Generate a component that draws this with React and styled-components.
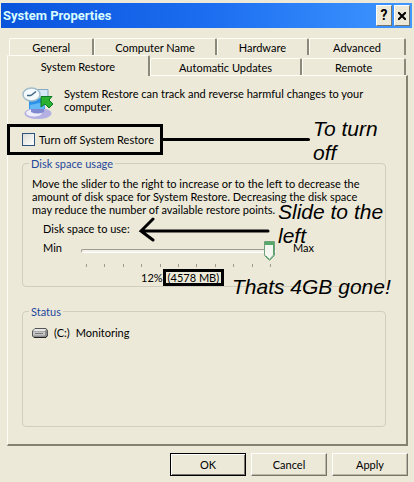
import { useState } from 'react'
import styled, { createGlobalStyle } from 'styled-components'

const GlobalStyle = createGlobalStyle`
    * {
        box-sizing: border-box;
    }

    body {
        margin: 0;
        background: #ece9d8;
    }

    body, button, input {
        font-family: Lato, "Liberation Sans", Arial, sans-serif;
        font-size: 11px;
        line-height: 13px;
        color: #000;
    }
`

const Window = styled.main`
    display: flex;
    flex-direction: column;
    min-height: 100vh;
    padding: 3px 2px 6px 1px;
    background: #ece9d8;
    overflow: hidden;
`

const TitleBar = styled.header`
    display: flex;
    align-items: center;
    gap: 2px;
    height: 25px;
    padding: 0 2px;
    background: linear-gradient(to right, #0a54dc, #1c6df0 50%, #3f97ff);
`

const Title = styled.h1`
    flex: 1;
    margin: 0;
    font-family: Roboto, Arial, sans-serif;
    font-size: 13px;
    line-height: 16px;
    color: #d8fbff;
`

const CaptionButton = styled.button`
    display: flex;
    align-items: center;
    justify-content: center;
    width: 16px;
    height: 21px;
    padding: 0;
    border: 1px solid;
    border-color: #fff #77756a #77756a #fff;
    background: #ece9d8;
    font-family: Roboto, Arial, sans-serif;
    font-size: 14px;
    font-weight: bold;
`

const Body = styled.div`
    flex: 1;
    display: flex;
    flex-direction: column;
    padding: 10px 4px 0 6px;
`

const TabRow = styled.div`
    display: flex;
    align-items: flex-end;
    height: ${({ $front }) => ($front ? '20px' : '17px')};
    padding: ${({ $front }) => ($front ? '0 2px 0 0' : '0 2px')};
`

const Tab = styled.button`
    flex: ${({ $grow }) => $grow} 1 0;
    min-width: 0;
    height: ${({ $active }) => ($active ? '21px' : '17px')};
    padding: 0;
    border: 1px solid;
    border-width: 1px 2px 0 1px;
    border-color: #fffef4 #8b897b #fffef4 #fffef4;
    border-radius: 2px 2px 0 0;
    background: #ece9d8;
    white-space: nowrap;
    position: relative;
    z-index: ${({ $active }) => ($active ? 1 : 0)};
    margin-bottom: ${({ $active }) => ($active ? '-1px' : '0')};
`

const Panel = styled.section`
    flex: 1;
    display: flex;
    flex-direction: column;
    padding: 11px 20px 17px 14px;
    border: 1px solid;
    border-width: 1px 2px 2px 1px;
    border-color: #fffef4 #85836f #85836f #fffef4;
`

const Intro = styled.div`
    display: flex;
    gap: 10px;
    min-height: 32px;
`

const Paragraph = styled.p`
    margin: 0;
`

const CheckRow = styled.div`
    display: flex;
    align-items: center;
    position: relative;
    margin: 5px 0 0 -15px;
    padding-right: 76px;
`

const CheckLabel = styled.label`
    display: flex;
    align-items: center;
    gap: 4px;
    height: 31px;
    padding: 0 6px 0 12px;
    border: 3px solid #000;
    white-space: nowrap;
`

const Checkbox = styled.input`
    appearance: none;
    width: 13px;
    height: 13px;
    margin: 0;
    border: 1px solid #2d5480;
    background: linear-gradient(135deg, #dcdcd7, #fff);

    &:checked {
        background: #21a121;
    }
`

const Connector = styled.span`
    flex: 1;
    height: 3px;
    border-radius: 0 2px 2px 0;
    background: #000;
`

// remarks lying over the dialog
const Note = styled.span`
    position: absolute;
    font-family: "Liberation Sans", Arial, sans-serif;
    font-size: 21px;
    font-style: italic;
    line-height: 24px;
`

const TurnOffNote = styled(Note)`
    top: -7px;
    right: 0;
    width: 73px;
`

const SlideNote = styled(Note)`
    top: -22px;
    left: 235px;
    width: 110px;
`

const GoneNote = styled(Note)`
    top: 6px;
    left: 189px;
    white-space: nowrap;
`

const Group = styled.fieldset`
    flex: ${({ $fill }) => ($fill ? '1' : 'none')};
    min-width: 0;
    margin: ${({ $fill }) => ($fill ? '18px' : '2px')} 0 0;
    padding: ${({ $fill }) => ($fill ? '8px' : '7px')} 9px 0;
    border: 1px solid #d0cebd;
    border-radius: 4px;
`

const Legend = styled.legend`
    margin-left: -3px;
    padding: 0 2px;
    color: #1f479c;
`

const Scale = styled.div`
    padding-left: 11px;
`

const ScaleTitle = styled.div`
    position: relative;
    margin-top: 6px;
`

const Arrow = styled.svg`
    position: absolute;
    top: -5px;
    left: 95px;
`

const ScaleGrid = styled.div`
    display: grid;
    grid-template-columns: 38px 1fr 100px;
    margin-top: 6px;
`

const ScaleEnd = styled.span`
    line-height: 14px;
    padding-left: ${({ $right }) => ($right ? '17px' : '0')};
`

const thumb = encodeURIComponent(
    '<svg xmlns="http://www.w3.org/2000/svg" width="11" height="20">' +
    '<path d="M.5.5h10v14l-5 5-5-5z" fill="#f6f6f0" stroke="#6f9f7c"/>' +
    '<path d="M1 1h9v3H1z" fill="#56a968"/>' +
    '<path d="M9.500 4v10l-4 4.500-4-4" fill="none" stroke="#58a56b"/></svg>'
)

const Slider = styled.input`
    appearance: none;
    width: 100%;
    height: 20px;
    margin: 0;
    background: transparent;

    &::-webkit-slider-runnable-track {
        height: 4px;
        border: 1px solid;
        border-color: #9d9c90 #fff #fff #9d9c90;
        border-radius: 2px;
        background: #f4f2e8;
    }

    &::-webkit-slider-thumb {
        appearance: none;
        width: 11px;
        height: 20px;
        margin-top: -9px;
        background: url("data:image/svg+xml,${thumb}") no-repeat;
    }
`

const Ticks = styled.div`
    grid-column: 2;
    display: flex;
    justify-content: space-between;
    padding: 3px 5px 2px;
`

const Tick = styled.span`
    width: 1px;
    height: 3px;
    background: #9d9b8d;
`

const Amount = styled.div`
    display: flex;
    align-items: center;
    position: relative;
    padding-left: 98px;
`

const Size = styled.span`
    height: 17px;
    padding: 0 2px;
    border: 3px solid #000;
    line-height: 11px;
`

const Drive = styled.div`
    display: flex;
    align-items: center;
    gap: 6px;
`

const Footer = styled.footer`
    display: flex;
    justify-content: flex-end;
    gap: 5px;
    padding-top: 7px;
`

const DialogButton = styled.button`
    width: 76px;
    height: 23px;
    padding: 0;
    border: 1px solid;
    border-color: ${({ $primary }) => ($primary ? '#000' : '#fff #77756a #77756a #fff')};
    background: #ece9d8;
    box-shadow: ${({ $primary }) => ($primary
        ? 'inset 1px 1px #fff, inset -1px -1px #77756a'
        : 'inset -1px -1px #bab7a6')};
`

const RestoreIcon = () => (
    <svg width="32" height="32" viewBox="0 0 32 32" aria-hidden="true">
        <ellipse cx="16" cy="26.5" rx="13.5" ry="5.5" fill="#b4b0e2" />
        <ellipse cx="12" cy="26" rx="8" ry="3.5" fill="#f0effc" />
        <path d="M9 22h13v3q-7 3-13 0z" fill="#7f8ad0" />
        <path d="M15 2.500h11V13H15z" fill="#d4e8f5" stroke="#86a9c2" />
        <path d="M7 12l15-1 1 11H7z" fill="#2c92ea" />
        <path d="M8 18l14-3v7H8z" fill="#62b9f6" />
        <ellipse cx="9.500" cy="7.500" rx="8.500" ry="6.500" fill="#f4fafd" stroke="#a3bccb" strokeWidth="1.500" />
        <path d="M9 8.500l5-4M9 8.500H5" stroke="#3f6484" strokeWidth="1.500" fill="none" />
        <path d="M19 9.500h11l-3 3.500 4 4-4 4-4-4-4 3z" fill="#2bb02f" stroke="#0b7a26" />
    </svg>
)

const DriveIcon = () => (
    <svg width="16" height="10" viewBox="0 0 16 10" aria-hidden="true">
        <path d="M3 .5h11l1.500 2v5l-2 2H2L.5 8V3z" fill="#8c8c8c" stroke="#555" />
        <path d="M3 1h11l-1 2H1z" fill="#e6e6e6" />
        <path d="M1 3.500h12v4H1z" fill="#c6c6c6" />
        <path d="M3 5.500h8" stroke="#777" />
        <path d="M2 9.500h12l1.500-2" stroke="#222" fill="none" />
    </svg>
)

const backTabs = [
    { name: 'General', grow: 85 },
    { name: 'Computer Name', grow: 123 },
    { name: 'Hardware', grow: 92 },
    { name: 'Advanced', grow: 97 },
]

const frontTabs = [
    { name: 'System Restore', grow: 143, active: true },
    { name: 'Automatic Updates', grow: 153 },
    { name: 'Remote', grow: 103 },
]

const Tabs = ({ tabs, front }) => (
    <TabRow role="tablist" $front={front}>
        {tabs.map(({ name, grow, active }) => (
            <Tab key={name} role="tab" aria-selected={Boolean(active)} $grow={grow} $active={active}>
                {name}
            </Tab>
        ))}
    </TabRow>
)

const App = () => {
    const [off, setOff] = useState(false)
    const [space, setSpace] = useState(12)

    return (
        <Window>
            <GlobalStyle />
            <TitleBar>
                <Title>System Properties</Title>
                <CaptionButton aria-label="Help">?</CaptionButton>
                <CaptionButton aria-label="Close">
                    <svg width="8" height="8" viewBox="0 0 8 8">
                        <path d="M0 0l8 8M8 0L0 8" stroke="#000" strokeWidth="2" />
                    </svg>
                </CaptionButton>
            </TitleBar>
            <Body>
                <Tabs tabs={backTabs} />
                <Tabs tabs={frontTabs} front />
                <Panel role="tabpanel">
                    <Intro>
                        <RestoreIcon />
                        <Paragraph>
                            System Restore can track and reverse harmful changes to your<br />
                            computer.
                        </Paragraph>
                    </Intro>
                    <CheckRow>
                        <CheckLabel>
                            <Checkbox type="checkbox" checked={off} onChange={e => setOff(e.target.checked)} />
                            Turn off System Restore
                        </CheckLabel>
                        <Connector />
                        <TurnOffNote>To turn off</TurnOffNote>
                    </CheckRow>
                    <Group>
                        <Legend>Disk space usage</Legend>
                        <Paragraph>
                            Move the slider to the right to increase or to the left to decrease the<br />
                            amount of disk space for System Restore. Decreasing the disk space<br />
                            may reduce the number of available restore points.
                        </Paragraph>
                        <Scale>
                            <ScaleTitle>
                                <label htmlFor="space">Disk space to use:</label>
                                <Arrow width="132" height="26" viewBox="0 0 132 26" aria-hidden="true">
                                    <path d="M130 14H3M15 2L3 14l12 9" fill="none" stroke="#000" strokeWidth="3" strokeLinecap="round" />
                                </Arrow>
                                <SlideNote>Slide to the left</SlideNote>
                            </ScaleTitle>
                            <ScaleGrid>
                                <ScaleEnd>Min</ScaleEnd>
                                <Slider
                                    id="space"
                                    type="range"
                                    min="0"
                                    max="12"
                                    value={space}
                                    onChange={e => setSpace(Number(e.target.value))}
                                />
                                <ScaleEnd $right>Max</ScaleEnd>
                                <Ticks>
                                    {Array.from({ length: 11 }, (_, i) => <Tick key={i} />)}
                                </Ticks>
                            </ScaleGrid>
                            <Amount>
                                {space}%
                                <Size>({space === 12 ? 4578 : Math.round(space * 381.5)} MB)</Size>
                                <GoneNote>Thats 4GB gone!</GoneNote>
                            </Amount>
                        </Scale>
                    </Group>
                    <Group $fill>
                        <Legend>Status</Legend>
                        <Drive>
                            <DriveIcon />
                            <span>(C:)</span>
                            <span>Monitoring</span>
                        </Drive>
                    </Group>
                </Panel>
                <Footer>
                    <DialogButton $primary>OK</DialogButton>
                    <DialogButton>Cancel</DialogButton>
                    <DialogButton>Apply</DialogButton>
                </Footer>
            </Body>
        </Window>
    )
}

export default App
